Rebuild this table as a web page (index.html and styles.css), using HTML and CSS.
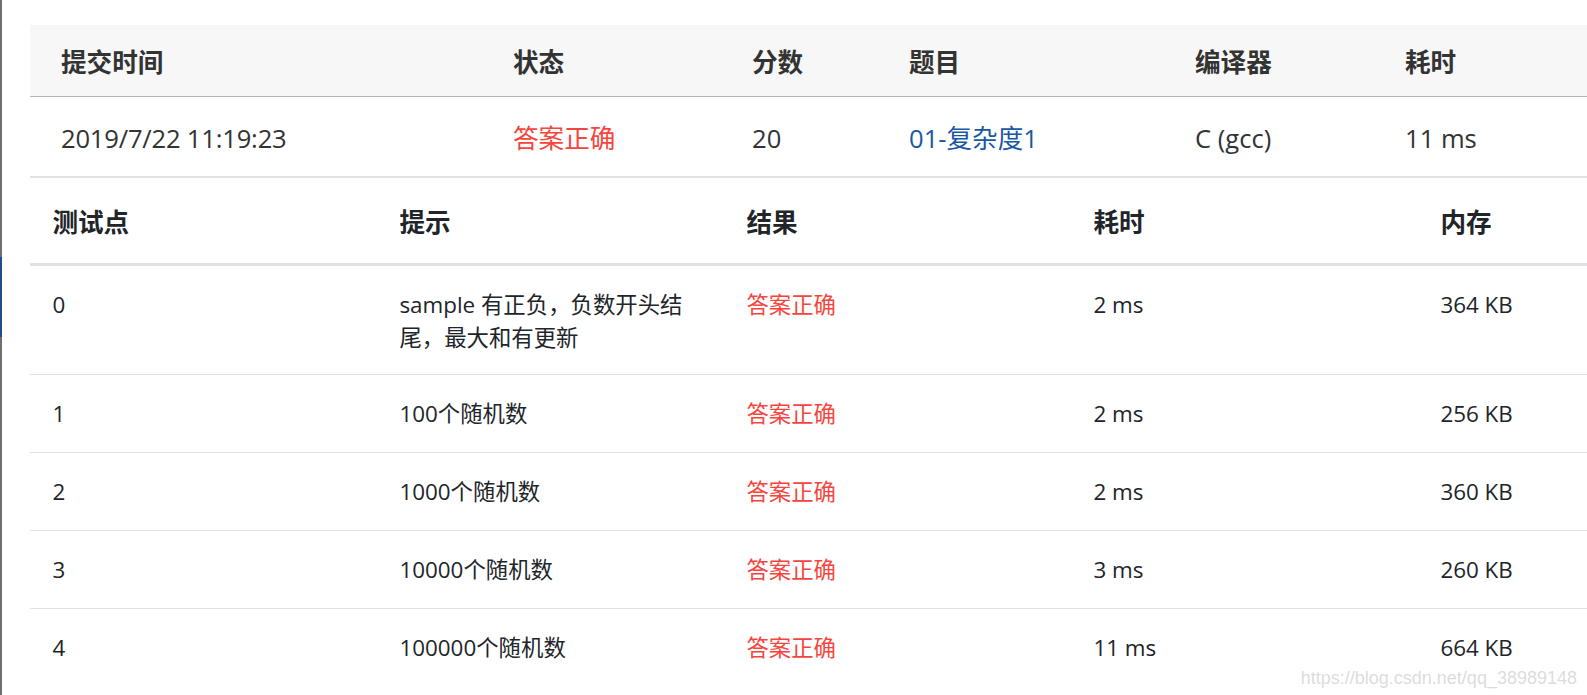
FILE: index.html
```html
<!DOCTYPE html>
<html lang="zh-CN">
<head>
<meta charset="utf-8">
<title>提交详情</title>
<link rel="stylesheet" href="styles.css">
</head>
<body>
<div class="page">
  <div class="edge"></div>
  <main class="content">
    <table class="summary">
      <colgroup>
        <col class="c-time"><col class="c-status"><col class="c-score"><col class="c-problem"><col class="c-compiler"><col class="c-cost">
      </colgroup>
      <thead>
        <tr><th>提交时间</th><th>状态</th><th>分数</th><th>题目</th><th>编译器</th><th>耗时</th></tr>
      </thead>
      <tbody>
        <tr>
          <td class="mono-ish">2019/7/22 11:19:23</td>
          <td class="ok">答案正确</td>
          <td>20</td>
          <td><a class="link" href="#">01-复杂度1</a></td>
          <td>C (gcc)</td>
          <td>11 ms</td>
        </tr>
      </tbody>
    </table>
    <table class="cases">
      <thead>
        <tr><th>测试点</th><th>提示</th><th>结果</th><th>耗时</th><th>内存</th></tr>
      </thead>
      <tbody>
        <tr><td>0</td><td>sample 有正负，负数开头结尾，最大和有更新</td><td class="ok2">答案正确</td><td>2 ms</td><td>364 KB</td></tr>
        <tr><td>1</td><td>100个随机数</td><td class="ok2">答案正确</td><td>2 ms</td><td>256 KB</td></tr>
        <tr><td>2</td><td>1000个随机数</td><td class="ok2">答案正确</td><td>2 ms</td><td>360 KB</td></tr>
        <tr><td>3</td><td>10000个随机数</td><td class="ok2">答案正确</td><td>3 ms</td><td>260 KB</td></tr>
        <tr><td>4</td><td>100000个随机数</td><td class="ok2">答案正确</td><td>11 ms</td><td>664 KB</td></tr>
      </tbody>
    </table>
  </main>
  <div class="watermark">https://blog.csdn.net/qq_38989148</div>
</div>
</body>
</html>
```
FILE: styles.css
```css
html, body {
  margin: 0;
  padding: 0;
  background: #ffffff;
  overflow: hidden;
}

.page {
  position: relative;
  display: flex;
  width: 1587px;
  height: 695px;
  overflow: hidden;
  font-family: "Open Sans", "Noto Sans CJK SC", sans-serif;
}

.edge {
  flex: 0 0 2px;
  background: linear-gradient(to bottom,
    #6e6e6e 0, #6e6e6e 257px,
    #1f4e8a 257px, #1f4e8a 337px,
    #6e6e6e 337px, #6e6e6e 100%);
}

.content {
  flex: 1;
  margin-left: 28px;
  padding-top: 25px;
  overflow: hidden;
}

table {
  border-collapse: collapse;
  table-layout: fixed;
  border-spacing: 0;
}

/* summary table */
.summary {
  width: 1650px;
  font-size: 25.6px;
  color: #333333;
}

.summary .c-time { width: 452px; }
.summary .c-status { width: 239px; }
.summary .c-score { width: 157px; }
.summary .c-problem { width: 286px; }
.summary .c-compiler { width: 210px; }
.summary .c-cost { width: 306px; }

.summary th {
  background: #f7f7f7;
  text-align: left;
  font-weight: 700;
  line-height: 38px;
  padding: 19px 0 14px 31px;
  border-bottom: 1px solid #b4b4b4;
}

.summary td {
  line-height: 38px;
  padding: 23px 0 18px 31px;
  border-bottom: 2px solid #e2e2e2;
  white-space: nowrap;
}

.mono-ish {
  letter-spacing: -0.2px;
}

.ok {
  color: #f5453d;
}

.link {
  color: #1a57a3;
  text-decoration: none;
}

/* test case table */
.cases {
  width: 1735px;
  color: #212529;
}

.cases th {
  text-align: left;
  font-size: 25.6px;
  font-weight: 700;
  line-height: 38px;
  padding: 26px 22.4px 21px;
  border-bottom: 3px solid #dee2e6;
}

.cases td {
  font-size: 22.4px;
  line-height: 33px;
  padding: 22px 22.4px;
  vertical-align: top;
  border-top: 1px solid #dee2e6;
}

.cases tbody tr:first-child td {
  border-top: 0;
  padding-bottom: 20px;
}

.ok2 {
  color: #f5453d;
}

.watermark {
  position: absolute;
  right: 10px;
  bottom: 6px;
  font-family: "Liberation Sans", Arial, sans-serif;
  font-size: 18px;
  color: rgba(185, 185, 185, 0.5);
  text-shadow: 0 0 1px rgba(255, 255, 255, 0.8);
  white-space: nowrap;
}
```
